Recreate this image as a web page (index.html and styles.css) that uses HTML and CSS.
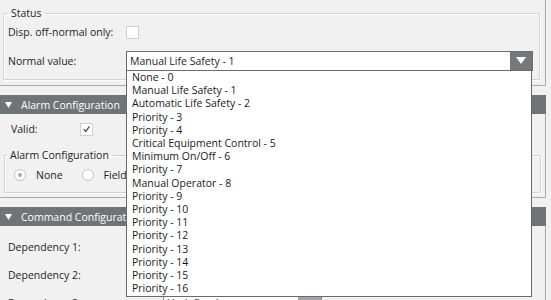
FILE: index.html
```html
<!DOCTYPE html>
<html>
<head>
<meta charset="utf-8">
<link rel="stylesheet" href="styles.css">
</head>
<body>
<div class="page">
  <section class="panel status">
    <fieldset class="group status-group">
      <legend>Status</legend>
      <div class="row r1">
        <span class="lbl wide">Disp. off-normal only:</span>
        <span class="check"></span>
      </div>
      <div class="row r2">
        <span class="lbl wide">Normal value:</span>
        <div class="combo main">
          <span class="val">Manual Life Safety - 1</span>
          <span class="btn"><svg width="10" height="7" viewBox="0 0 10 7"><polygon points="0,0 10,0 5,7" fill="#fff"/></svg></span>
        </div>
      </div>
    </fieldset>
  </section>

  <div class="header"><svg class="tri" width="7" height="6" viewBox="0 0 7 6"><polygon points="0,0 7,0 3.5,6" fill="#fff"/></svg><span>Alarm Configuration</span></div>
  <section class="panel alarm">
    <div class="row valid">
      <span class="lbl short">Valid:</span>
      <span class="check on"><svg width="12" height="12" viewBox="0 0 12 12"><path d="M3 6.2 L5.2 8.6 L9.2 3.2" fill="none" stroke="#505050" stroke-width="1.5"/></svg></span>
    </div>
    <fieldset class="group alarm-group">
      <legend>Alarm Configuration</legend>
      <div class="radios">
        <span class="radio on"></span><span class="rlbl">None</span>
        <span class="radio"></span><span class="rlbl">Field</span>
      </div>
    </fieldset>
  </section>

  <div class="header"><svg class="tri" width="7" height="6" viewBox="0 0 7 6"><polygon points="0,0 7,0 3.5,6" fill="#fff"/></svg><span>Command Configuration</span></div>
  <section class="panel command">
    <div class="row dep">
      <span class="lbl dlbl">Dependency 1:</span>
      <div class="combo small"><span class="val">Undefined</span><span class="btn"></span></div>
    </div>
    <div class="row dep">
      <span class="lbl dlbl">Dependency 2:</span>
      <div class="combo small"><span class="val">Undefined</span><span class="btn"></span></div>
    </div>
    <div class="row dep">
      <span class="lbl dlbl">Dependency 3:</span>
      <div class="combo small"><span class="val">Undefined</span><span class="btn"></span></div>
    </div>
  </section>

  <ul class="popup">
    <li>None - 0</li>
    <li>Manual Life Safety - 1</li>
    <li>Automatic Life Safety - 2</li>
    <li>Priority - 3</li>
    <li>Priority - 4</li>
    <li>Critical Equipment Control - 5</li>
    <li>Minimum On/Off - 6</li>
    <li>Priority - 7</li>
    <li>Manual Operator - 8</li>
    <li>Priority - 9</li>
    <li>Priority - 10</li>
    <li>Priority - 11</li>
    <li>Priority - 12</li>
    <li>Priority - 13</li>
    <li>Priority - 14</li>
    <li>Priority - 15</li>
    <li>Priority - 16</li>
  </ul>
</div>
</body>
</html>
```

FILE: styles.css
```css
* { box-sizing: border-box; }
html, body { margin: 0; padding: 0; }
body {
  background: #f1f1f1;
  font-family: "Open Sans", "Noto Sans", sans-serif;
  font-size: 10.5px;
  color: #1e1e1e;
  overflow: hidden;
}
.page {
  position: relative;
  width: 551px;
  height: 300px;
  overflow: hidden;
}
.panel {
  width: 546px;
  border-right: 1px solid #ababab;
  border-bottom: 1px solid #ababab;
}
.status {
  height: 86px;
  padding-top: 6px;
}
.group {
  margin: 0;
  border: 1px solid #d3d3d3;
  box-shadow: inset 1px 1px 0 #fff, 1px 1px 0 #fff;
  min-width: 0;
}
.group legend {
  line-height: 14px;
  padding: 0 3px;
  color: #1e1e1e;
}
.status-group {
  margin: 0 5px 0 3px;
  padding: 0 0 0 4px;
  height: 74px;
}
.row {
  display: flex;
  align-items: center;
}
.r1 { height: 24px; }
.r2 { height: 33px; }
.lbl { flex: none; }
.wide { width: 118px; }
.check {
  width: 13px;
  height: 13px;
  border: 1px solid #cfcfcf;
  background: #fff;
  display: flex;
  align-items: center;
  justify-content: center;
}
.combo {
  display: flex;
  align-items: stretch;
  background: #fff;
  height: 20px;
}
.combo .val {
  flex: 1;
  padding-left: 3px;
  line-height: 18px;
}
.combo .btn {
  flex: none;
  display: flex;
  align-items: center;
  justify-content: center;
}
.main {
  width: 407px;
  border: 1px solid #6d6d6d;
}
.main .btn {
  width: 22px;
  background: #747879;
}

.header {
  width: 546px;
  height: 19px;
  margin-top: 9px;
  background: #6f7476;
  color: #fff;
  display: flex;
  align-items: center;
  padding-left: 5px;
}
.header .tri { margin-right: 9px; }

.alarm {
  height: 84px;
  padding-top: 1px;
}
.valid {
  height: 28px;
  padding-left: 11px;
}
.short { width: 69px; }
.alarm-group {
  margin: 5px 4px 0 4px;
  padding: 0 0 0 2px;
  height: 45px;
}
.radios {
  height: 26px;
  display: flex;
  align-items: center;
  padding-left: 7px;
}
.radio {
  width: 12px;
  height: 12px;
  border: 1px solid #c3c3c3;
  border-radius: 50%;
  background: #fff;
  display: flex;
  align-items: center;
  justify-content: center;
}
.radio.on::after {
  content: "";
  width: 4px;
  height: 4px;
  border-radius: 50%;
  background: #a8a8a8;
}
.rlbl { margin-left: 10px; margin-right: 19px; }
.rlbl + .radio { }

.command {
  height: 120px;
  padding-top: 7px;
  border-bottom: none;
}
.dep {
  height: 28px;
  padding-left: 8px;
}
.dlbl { width: 155px; }
.small {
  width: 159px;
  border: 1px solid #8c8c8c;
}
.small .btn {
  width: 23px;
  background: #a1a5a7;
}

.popup {
  position: absolute;
  left: 126px;
  top: 71px;
  width: 406px;
  margin: 0;
  padding: 0 0 1px 0;
  list-style: none;
  background: #fff;
  border: 1px solid #6a6a6a;
  border-top: none;
}
.popup li {
  line-height: 13.2px;
  padding-left: 5px;
  white-space: nowrap;
  color: #1a1a1a;
}
```
